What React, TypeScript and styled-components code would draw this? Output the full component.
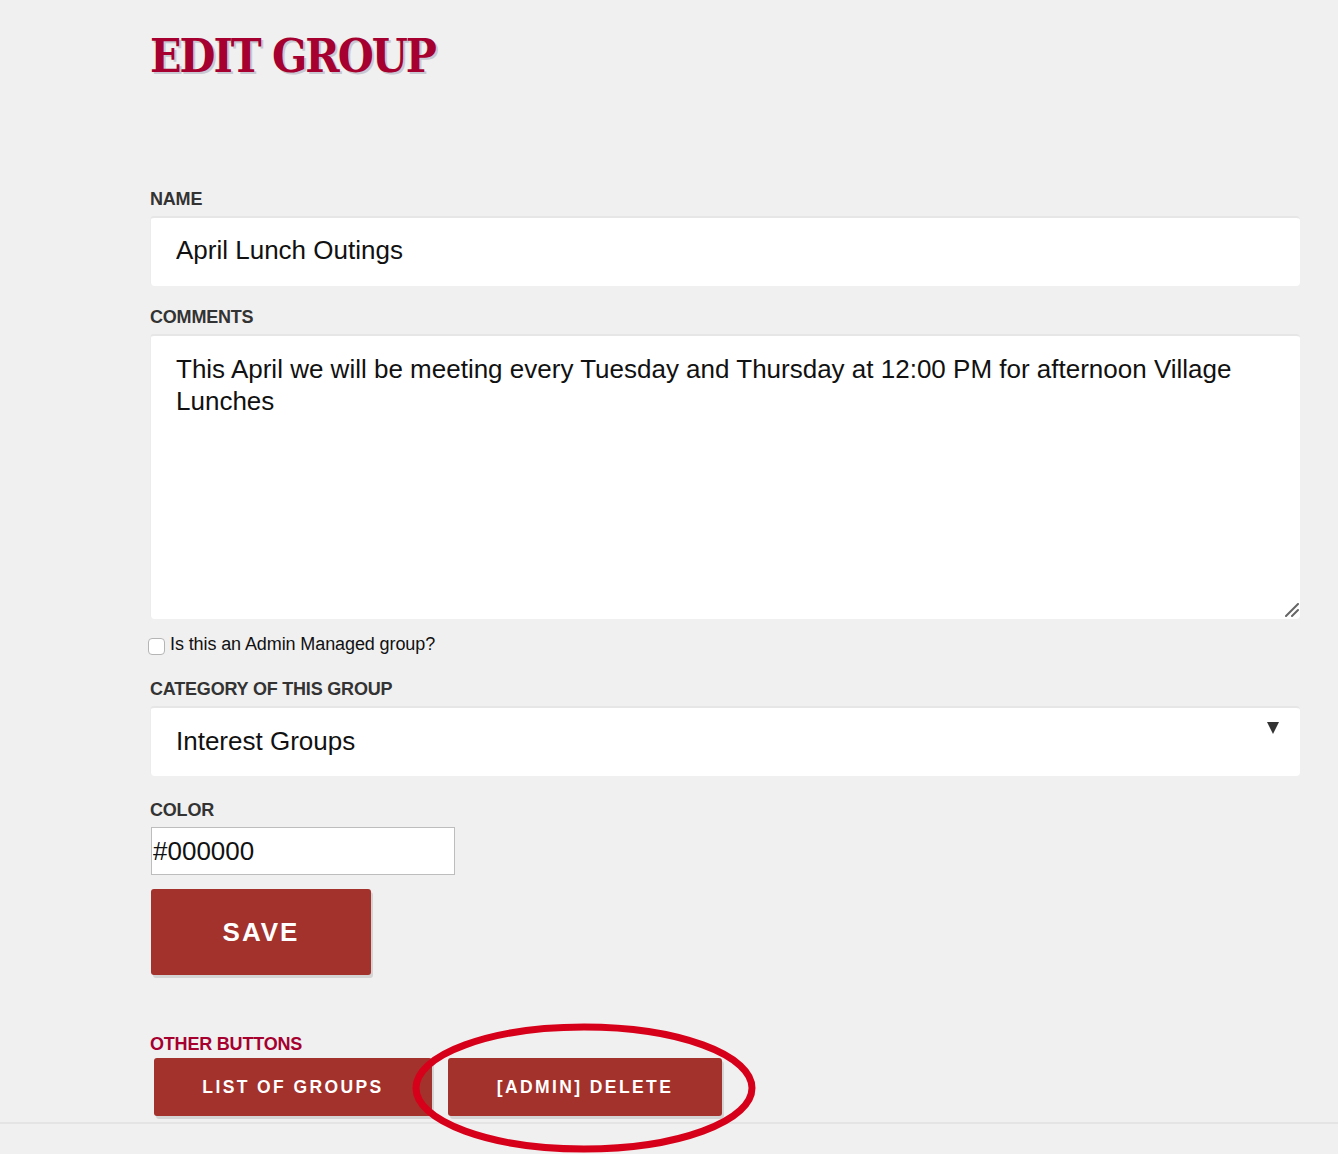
import React from 'react';
import styled, { createGlobalStyle } from 'styled-components';

const GlobalStyle = createGlobalStyle`
  html, body {
    margin: 0;
    padding: 0;
    background: #f0f0f0;
  }
  body {
    font-family: "Liberation Sans", Arial, sans-serif;
    color: #111;
  }
`

const Screen = styled.div`
  min-height: 1154px;
`

const Page = styled.div`
  width: 1338px;
  box-sizing: border-box;
  padding: 0 38px 0 150px;
`

const Title = styled.h1`
  margin: 0;
  padding-top: 28px;
  height: 188px;
  box-sizing: border-box;
  font-family: "DejaVu Serif Condensed", "DejaVu Serif", serif;
  font-weight: bold;
  font-size: 46px;
  line-height: 56px;
  color: #a5002f;
  letter-spacing: -2px;
  text-shadow: 2px 2px 0 #c8c8d2;
`

const Label = styled.div<{ $accent?: boolean }>`
  font-size: 18px;
  font-weight: bold;
  line-height: 22px;
  color: ${p => (p.$accent ? '#a5002f' : '#333')};
  margin-bottom: ${p => (p.$accent ? '3px' : '6px')};
  letter-spacing: -0.2px;
`

const Field = styled.div<{ $gap?: number }>`
  margin-bottom: ${p => p.$gap ?? 20}px;
`

const TextInput = styled.input`
  display: block;
  width: 100%;
  height: 70px;
  box-sizing: border-box;
  border: none;
  border-top: 2px solid #e6e6e6;
  border-left: 1px solid #ececec;
  border-radius: 4px;
  background: #fff;
  padding: 0 25px 3px;
  font-family: "Liberation Sans", Arial, sans-serif;
  font-size: 26px;
  color: #111;
  outline: none;
`

const AreaWrap = styled.div`
  position: relative;
`

const TextArea = styled.textarea`
  display: block;
  width: 100%;
  height: 285px;
  box-sizing: border-box;
  border: none;
  border-top: 2px solid #e6e6e6;
  border-left: 1px solid #ececec;
  border-radius: 4px;
  background: #fff;
  padding: 17px 25px;
  font-family: "Liberation Sans", Arial, sans-serif;
  font-size: 26px;
  line-height: 32px;
  color: #111;
  outline: none;
  resize: none;
`

const Grip = styled.svg`
  position: absolute;
  right: 1px;
  bottom: 2px;
  pointer-events: none;
`

const CheckRow = styled.label`
  display: flex;
  align-items: center;
  gap: 5px;
  margin: 14px 0 23px -2px;
  font-size: 18px;
  line-height: 22px;
  color: #111;
  letter-spacing: -0.1px;
`

const Check = styled.input`
  appearance: none;
  width: 17px;
  height: 17px;
  margin: 5px 0 0;
  border: 1px solid #b5b5b5;
  border-radius: 4px;
  background: #fff;
`

const SelectWrap = styled.div`
  position: relative;
`

const Select = styled.select`
  display: block;
  width: 100%;
  height: 70px;
  box-sizing: border-box;
  appearance: none;
  border: none;
  border-top: 2px solid #e6e6e6;
  border-left: 1px solid #ececec;
  border-radius: 4px;
  background: #fff;
  padding: 0 25px 2px;
  font-family: "Liberation Sans", Arial, sans-serif;
  font-size: 26px;
  color: #111;
  outline: none;
`

const Arrow = styled.span`
  position: absolute;
  right: 21px;
  top: 16px;
  width: 0;
  height: 0;
  border-left: 6.5px solid transparent;
  border-right: 6.5px solid transparent;
  border-top: 12px solid #333;
  pointer-events: none;
`

const ColorInput = styled.input`
  display: block;
  width: 304px;
  height: 48px;
  box-sizing: border-box;
  margin-left: 1px;
  border: 1px solid #bdbdbd;
  background: #fff;
  padding: 0 1px;
  font-family: "Liberation Sans", Arial, sans-serif;
  font-size: 26px;
  color: #111;
  outline: none;
`

const Button = styled.button<{ $big?: boolean; $w?: number }>`
  display: inline-flex;
  align-items: center;
  justify-content: center;
  box-sizing: border-box;
  width: ${p => (p.$big ? 220 : p.$w ?? 278)}px;
  height: ${p => (p.$big ? '86px' : '58px')};
  border: none;
  border-radius: 3px;
  background: #a3312c;
  color: #fff;
  font-family: "Liberation Sans", Arial, sans-serif;
  font-weight: bold;
  font-size: ${p => (p.$big ? '26px' : '17.5px')};
  letter-spacing: ${p => (p.$big ? '2px' : '2.4px')};
  box-shadow: 2px 3px 0 #d4d4d4;
  cursor: pointer;
`

const SaveRow = styled.div`
  margin: 14px 0 0 1px;
`

const Others = styled.div`
  margin-top: 58px;
`

const ButtonRow = styled.div`
  position: relative;
  display: flex;
  gap: 16px;
  margin-left: 4px;
`

const Ring = styled.svg`
  position: absolute;
  left: 255px;
  top: -37px;
  z-index: 2;
  pointer-events: none;
`

const Rule = styled.div`
  margin-top: 6px;
  height: 2px;
  background: #e4e4e4;
  width: 1338px;
`

export default function App() {
  return (
    <Screen>
      <GlobalStyle />
      <Page>
        <Title>EDIT GROUP</Title>

        <Field>
          <Label>NAME</Label>
          <TextInput defaultValue="April Lunch Outings" />
        </Field>

        <Field $gap={0}>
          <Label>COMMENTS</Label>
          <AreaWrap>
            <TextArea defaultValue="This April we will be meeting every Tuesday and Thursday at 12:00 PM for afternoon Village Lunches" />
            <Grip width="14" height="14" viewBox="0 0 14 14">
              <path d="M1 13 L13 1 M7 13 L13 7" stroke="#666" strokeWidth="2" strokeLinecap="round" />
            </Grip>
          </AreaWrap>
        </Field>

        <CheckRow>
          <Check type="checkbox" />
          Is this an Admin Managed group?
        </CheckRow>

        <Field $gap={23}>
          <Label>CATEGORY OF THIS GROUP</Label>
          <SelectWrap>
            <Select defaultValue="interest">
              <option value="interest">Interest Groups</option>
            </Select>
            <Arrow />
          </SelectWrap>
        </Field>

        <Field $gap={0}>
          <Label>COLOR</Label>
          <ColorInput defaultValue="#000000" />
        </Field>

        <SaveRow>
          <Button $big>SAVE</Button>
        </SaveRow>

        <Others>
          <Label $accent>OTHER BUTTONS</Label>
          <ButtonRow>
            <Button>LIST OF GROUPS</Button>
            <Button $w={274}>[ADMIN] DELETE</Button>
            <Ring width="350" height="134" viewBox="0 0 350 134">
              <ellipse cx="175" cy="67" rx="168" ry="61" fill="none" stroke="#d7001a" strokeWidth="7" />
            </Ring>
          </ButtonRow>
        </Others>
      </Page>
      <Rule />
    </Screen>
  );
}
